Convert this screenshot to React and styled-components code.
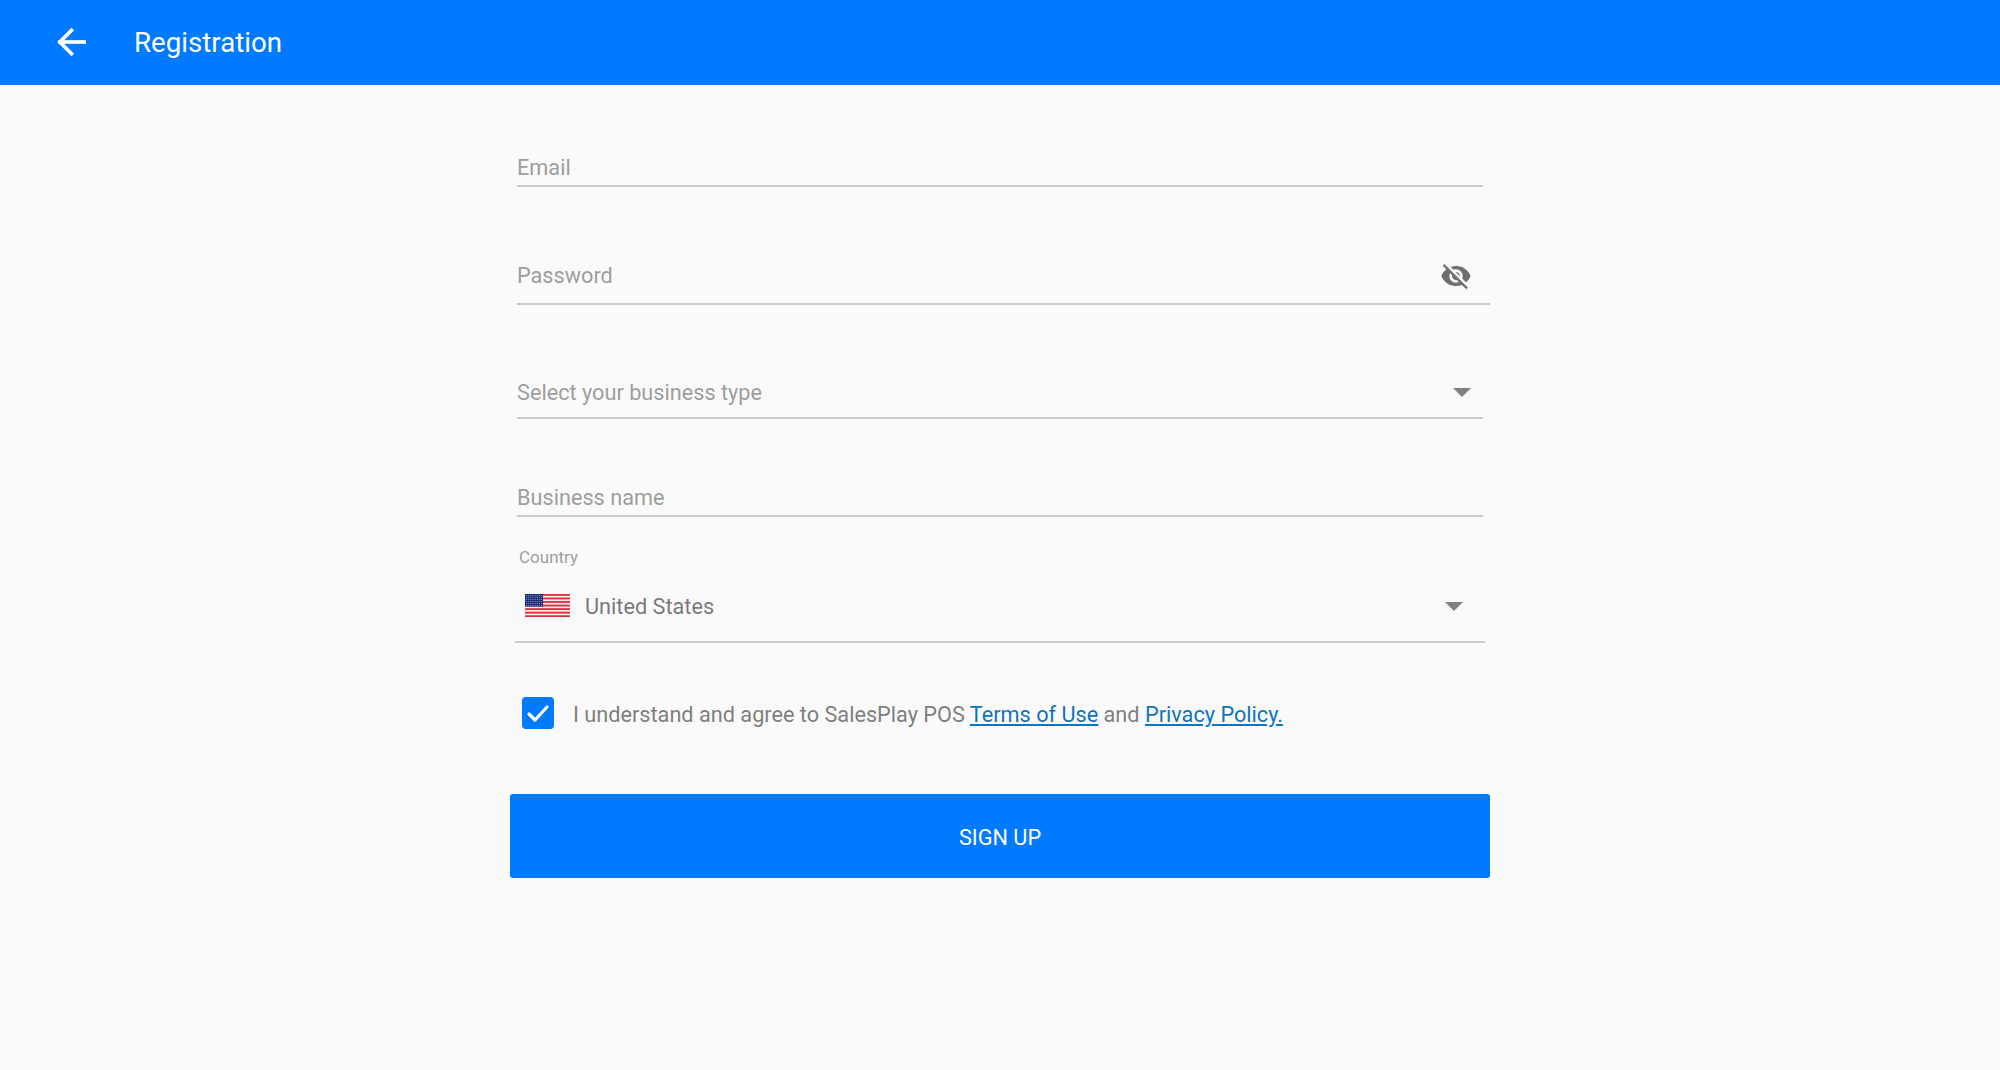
import React from "react";
import styled, { createGlobalStyle } from "styled-components";

const GlobalStyle = createGlobalStyle`
  html, body {
    margin: 0;
    padding: 0;
    background: #fafafa;
    font-family: Roboto, "Liberation Sans", sans-serif;
  }
`;

const Page = styled.div`
  min-height: 1070px;
  display: flex;
  flex-direction: column;
  background: #fafafa;
`;

const Header = styled.header`
  height: 85px;
  background: #007aff;
  display: flex;
  align-items: center;
  padding-left: 55px;
  color: #fff;
`;

const BackIcon = styled.svg`
  width: 33px;
  height: 34px;
  margin-right: 46px;
  margin-top: -1px;
`;

const Title = styled.h1`
  margin: 0;
  font-size: 27.7px;
  font-weight: 400;
`;

const Form = styled.form`
  width: 980px;
  margin: 0 auto;
  display: flex;
  flex-direction: column;
`;

const Field = styled.div`
  display: flex;
  align-items: center;
  justify-content: space-between;
  height: ${(p) => p.$height}px;
  margin-top: ${(p) => p.$top}px;
  margin-left: 7px;
  margin-right: ${(p) => p.$insetRight}px;
  padding-top: ${(p) => p.$shift}px;
  border-bottom: 2px solid #cbcbcb;
  box-sizing: border-box;
`;

const Placeholder = styled.span`
  font-size: 21.7px;
  color: #9e9e9e;
`;

const EyeIcon = styled.svg`
  width: 32px;
  height: 32px;
  margin-right: 18px;
`;

const Caret = styled.span`
  width: 0;
  height: 0;
  border-left: 9px solid transparent;
  border-right: 9px solid transparent;
  border-top: 9px solid #808080;
  margin-right: ${(p) => p.$right}px;
  margin-top: -1px;
`;

const CountryLabel = styled.div`
  font-size: 17px;
  color: #9e9e9e;
  margin: 30px 0 0 9px;
  line-height: 20px;
`;

const CountryRow = styled.div`
  display: flex;
  align-items: center;
  height: 76px;
  margin: 0 5px;
  padding: 5px 22px 0 10px;
  border-bottom: 2px solid #cbcbcb;
  box-sizing: border-box;
`;

const CountryName = styled.span`
  font-size: 21.7px;
  color: #7a7a7a;
  margin-left: 15px;
  flex: 1;
`;

const Flag = styled.svg`
  width: 45px;
  height: 23px;
  margin-top: -3px;
`;

const AgreeRow = styled.div`
  display: flex;
  align-items: center;
  margin: 54px 0 0 12px;
  height: 34px;
`;

const CheckBox = styled.span`
  width: 32px;
  height: 32px;
  border-radius: 4px;
  background: #007aff;
  display: flex;
  align-items: center;
  justify-content: center;
  margin-right: 19px;
  margin-top: -3px;
`;

const AgreeText = styled.span`
  font-size: 21.7px;
  color: #7f7f7f;
`;

const TextLink = styled.a`
  color: #0f75bc;
  text-decoration: underline;
`;

const SignUpButton = styled.button`
  margin-top: 63px;
  height: 84px;
  border: 0;
  border-radius: 3px;
  padding-top: 3px;
  background: #007aff;
  color: #fff;
  font-family: inherit;
  font-size: 21.7px;
  text-transform: uppercase;
`;

const UsFlag = () => {
  const stripes = [0, 1, 2, 3, 4, 5, 6];
  const dots = [];
  for (let row = 0; row < 6; row++) {
    for (let col = 0; col < 8; col++) {
      dots.push(<rect key={`${row}-${col}`} x={1.2 + col * 2.1} y={1 + row * 2} width="0.9" height="0.9" fill="#aab4d8" />);
    }
  }
  return (
    <Flag viewBox="0 0 45 23" preserveAspectRatio="none">
      <rect width="45" height="23" fill="#fbe9ea" />
      {stripes.map((i) => (
        <rect key={i} y={i * 3.55} width="45" height="1.8" fill="#d5303e" />
      ))}
      <rect width="18" height="12.6" fill="#1c2c78" />
      {dots}
    </Flag>
  );
};

const App = () => {
  return (
    <Page>
      <GlobalStyle />
      <Header>
        <BackIcon viewBox="0 0 34 34" fill="none" stroke="#fff" strokeWidth="3.8" strokeLinecap="square">
          <path d="M30 17H5" />
          <path d="M17 5 5 17l12 12" />
        </BackIcon>
        <Title>Registration</Title>
      </Header>
      <Form>
        <Field $height={42} $top={60} $insetRight={7} $shift={4}>
          <Placeholder>Email</Placeholder>
        </Field>
        <Field $height={70} $top={48} $insetRight={0} $shift={13}>
          <Placeholder>Password</Placeholder>
          <EyeIcon viewBox="0 0 24 24" fill="#6f6f6f">
            <path d="M12 7c2.76 0 5 2.24 5 5 0 .65-.13 1.26-.36 1.83l2.92 2.92c1.51-1.26 2.7-2.89 3.43-4.75-1.73-4.39-6-7.5-11-7.5-1.4 0-2.74.25-3.98.7l2.16 2.16C10.74 7.13 11.35 7 12 7zM2 4.27l2.28 2.28.46.46C3.08 8.3 1.78 10.02 1 12c1.73 4.39 6 7.5 11 7.5 1.55 0 3.03-.3 4.38-.84l.42.42L19.73 22 21 20.73 3.27 3 2 4.27zM7.53 9.8l1.55 1.55c-.05.21-.08.43-.08.65 0 1.66 1.34 3 3 3 .22 0 .44-.03.65-.08l1.55 1.55c-.67.33-1.41.53-2.2.53-2.76 0-5-2.24-5-5 0-.79.2-1.53.53-2.2zm4.31-.78 3.15 3.15.02-.16c0-1.66-1.34-3-3-3l-.17.01z" />
          </EyeIcon>
        </Field>
        <Field $height={66} $top={48} $insetRight={7} $shift={15}>
          <Placeholder>Select your business type</Placeholder>
          <Caret $right={12} />
        </Field>
        <Field $height={48} $top={50} $insetRight={7} $shift={10}>
          <Placeholder>Business name</Placeholder>
        </Field>
        <CountryLabel>Country</CountryLabel>
        <CountryRow>
          <UsFlag />
          <CountryName>United States</CountryName>
          <Caret $right={0} />
        </CountryRow>
        <AgreeRow>
          <CheckBox>
            <svg width="24" height="24" viewBox="0 0 24 24" fill="none" stroke="#fff" strokeWidth="3.2" strokeLinecap="round" strokeLinejoin="round">
              <path d="M3 13l6 6L21 6" />
            </svg>
          </CheckBox>
          <AgreeText>
            I understand and agree to SalesPlay POS <TextLink href="#terms">Terms of Use</TextLink> and{" "}
            <TextLink href="#privacy">Privacy Policy.</TextLink>
          </AgreeText>
        </AgreeRow>
        <SignUpButton type="button">Sign up</SignUpButton>
      </Form>
    </Page>
  );
};

export default App;
